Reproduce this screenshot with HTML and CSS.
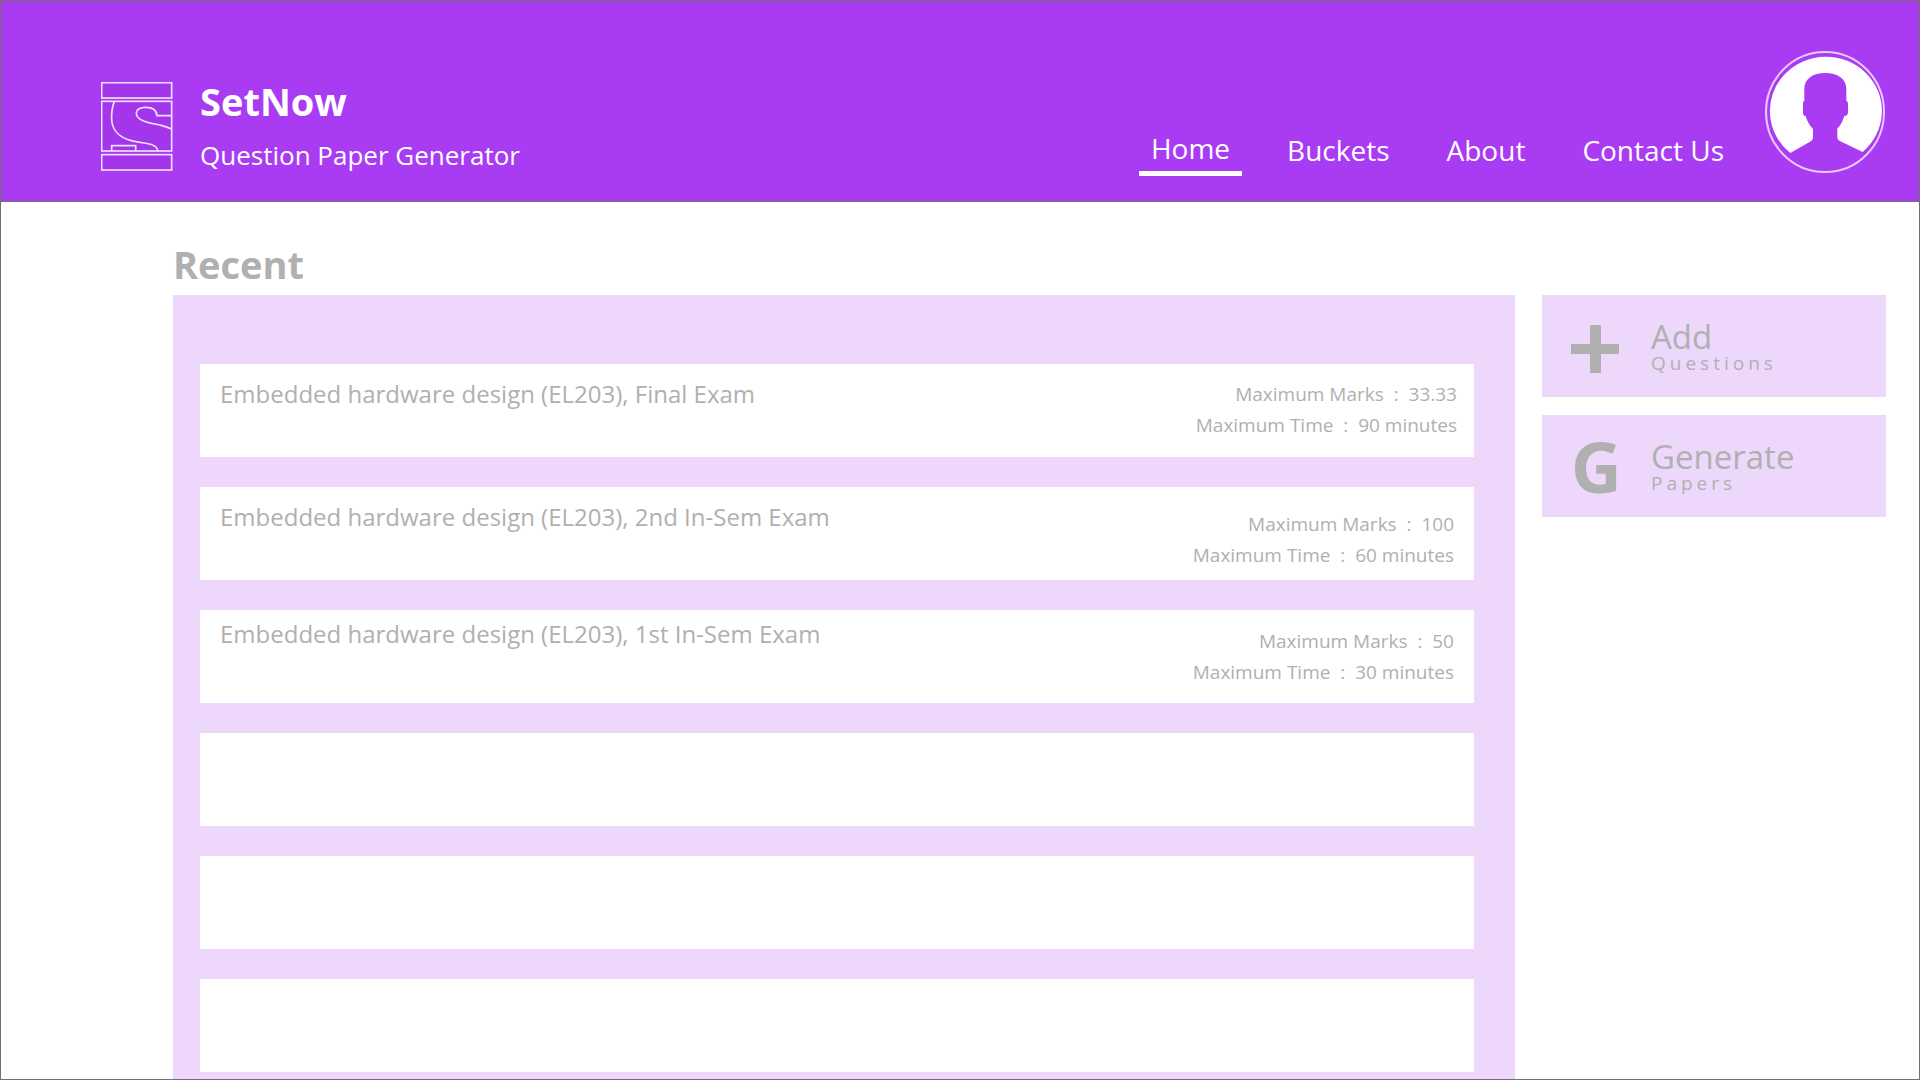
FILE: index.html
```html
<!DOCTYPE html>
<html lang="en">
<head>
<meta charset="utf-8">
<meta name="viewport" content="width=device-width, initial-scale=1">
<title>SetNow</title>
<link rel="stylesheet" href="styles.css">
</head>
<body>
<header class="header">
  <div class="brand">
    <svg class="logo" viewBox="33 36 216 267" fill="#a336eb" stroke="#f1dfff" stroke-width="5" aria-hidden="true">
      <rect x="35" y="38" width="210" height="46"/>
      <rect x="35" y="94" width="210" height="149"/>
      <rect x="35" y="254" width="210" height="46"/>
      <path fill="none" d="M73 94C65 115 64 132 65 150C68 190 96 204 124 212C160 222 203 218 203 243"/>
      <path fill="none" d="M244 137H201C200 120 188 112 168 112C148 112 139 120 139 130C139 147 160 155 185 160C210 164 225 167 244 177"/>
      <path fill="none" d="M65 243V227H137V243"/>
    </svg>
    <div>
      <h1 class="name">SetNow</h1>
      <p class="tagline">Question Paper Generator</p>
    </div>
  </div>
  <nav class="nav">
    <a class="link active" href="#" aria-current="page">Home</a>
    <a class="link" href="#">Buckets</a>
    <a class="link" href="#">About</a>
    <a class="link" href="#">Contact Us</a>
  </nav>
  <a class="profile" href="#" aria-label="Profile">
    <svg class="avatar" viewBox="45 33 360 366" aria-hidden="true">
      <ellipse cx="225" cy="216" rx="177" ry="180" fill="none" stroke="#e9c9fc" stroke-width="6"/>
      <path fill="#fff" d="M121 339A168 163 0 1 1 338 336L271 304C264 300 262 297 262 291V266C272 255 277 246 283 228C290 229 294 222 294 216V192C294 187 292 184 289 183V148C290 116 262 99 226 99C188 99 162 117 163 148V183C160 184 159 187 159 192V218C159 225 163 228 167 229C172 245 179 257 189 267V291C189 298 187 301 180 305Z"/>
    </svg>
  </a>
</header>

<main class="main">
  <h2 class="heading">Recent</h2>
  <section class="panel" aria-label="Recent papers">
    <article class="card">
      <h3 class="title">Embedded hardware design (EL203), Final Exam</h3>
      <p class="meta">Maximum Marks&nbsp; :&nbsp; 33.33<br>Maximum Time&nbsp; :&nbsp; 90 minutes</p>
    </article>
    <article class="card card-low">
      <h3 class="title">Embedded hardware design (EL203), 2nd In-Sem Exam</h3>
      <p class="meta">Maximum Marks&nbsp; :&nbsp; 100<br>Maximum Time&nbsp; :&nbsp; 60 minutes</p>
    </article>
    <article class="card card-high">
      <h3 class="title">Embedded hardware design (EL203), 1st In-Sem Exam</h3>
      <p class="meta">Maximum Marks&nbsp; :&nbsp; 50<br>Maximum Time&nbsp; :&nbsp; 30 minutes</p>
    </article>
    <article class="card"></article>
    <article class="card"></article>
    <article class="card"></article>
  </section>
  <aside class="actions">
    <button class="action" type="button">
      <svg class="plus" viewBox="0 0 48 54" aria-hidden="true"><path fill="#b0b0b0" d="M19 6H30V25H48V35H30V54H19V35H0V25H19Z"/></svg>
      <span class="label">Add<small class="sub">Questions</small></span>
    </button>
    <button class="action" type="button">
      <span class="letter">G</span>
      <span class="label">Generate<small class="sub">Papers</small></span>
    </button>
  </aside>
</main>
</body>
</html>
```
FILE: styles.css
```css
* {
  box-sizing: border-box;
}

body {
  display: flex;
  flex-direction: column;
  min-height: 100vh;
  margin: 0;
  border: 1px solid #707070;
  background: #fff;
  color: #b0b0b0;
  font-family: "Open Sans", "Noto Sans", sans-serif;
}

h1, h2, h3, p {
  margin: 0;
}

.header {
  display: flex;
  align-items: flex-end;
  padding: 50px 34px 25px 100px;
  border-bottom: 1px solid #707070;
  background: #a93bf3;
  color: #fff;
}

.brand {
  display: flex;
  align-items: center;
  gap: 27px;
  margin-right: auto;
}

.logo {
  width: 72px;
  height: 89px;
}

.name {
  font-size: 38px;
  line-height: 50px;
}

.tagline {
  margin-top: 8px;
  font-size: 26px;
  line-height: 42px;
}

.nav {
  display: flex;
  align-items: flex-end;
  gap: 33px;
}

.link {
  padding: 0 12px 6px;
  color: #fff;
  font-size: 28px;
  line-height: 40px;
  text-decoration: none;
}

.active {
  padding-bottom: 3px;
  border-bottom: 5px solid #fff;
}

.profile {
  margin: 0 0 3px 29px;
}

.avatar {
  display: block;
  width: 120px;
  height: 122px;
}

.main {
  display: grid;
  flex: 1;
  grid-template-columns: minmax(0, 1fr) 344px;
  grid-template-rows: auto 1fr;
  column-gap: 27px;
  padding: 33px 33px 0 172px;
}

.heading {
  grid-column: 1 / -1;
  font-size: 38px;
  line-height: 58px;
  padding-bottom: 2px;
}

.panel {
  display: flex;
  flex-direction: column;
  gap: 30px;
  padding: 69px 41px 7px 27px;
  background: #edd8fc;
}

.card {
  display: flex;
  justify-content: space-between;
  min-height: 93px;
  padding: 14px 17px 0 20px;
  background: #fff;
}

.card-low,
.card-high {
  padding-right: 20px;
}

.card-high {
  padding-top: 8px;
}

.title {
  font-size: 24px;
  font-weight: 400;
  line-height: 32px;
}

.meta {
  padding-top: 1px;
  font-size: 19px;
  line-height: 31px;
  text-align: right;
}

.card-low .meta,
.card-high .meta {
  padding-top: 8px;
}

.actions {
  display: flex;
  flex-direction: column;
  gap: 18px;
}

.action {
  display: grid;
  grid-template-columns: 48px 1fr;
  align-items: center;
  column-gap: 32px;
  height: 102px;
  padding: 0 29px;
  border: 0;
  background: #edd8fc;
  color: inherit;
  font-family: inherit;
  text-align: left;
}

.plus {
  width: 48px;
  height: 54px;
}

.letter {
  font-size: 70px;
  font-weight: 700;
  line-height: 80px;
}

.label {
  font-size: 33px;
  line-height: 34px;
}

.sub {
  display: block;
  font-size: 19px;
  letter-spacing: 4px;
  line-height: 18px;
}
```
